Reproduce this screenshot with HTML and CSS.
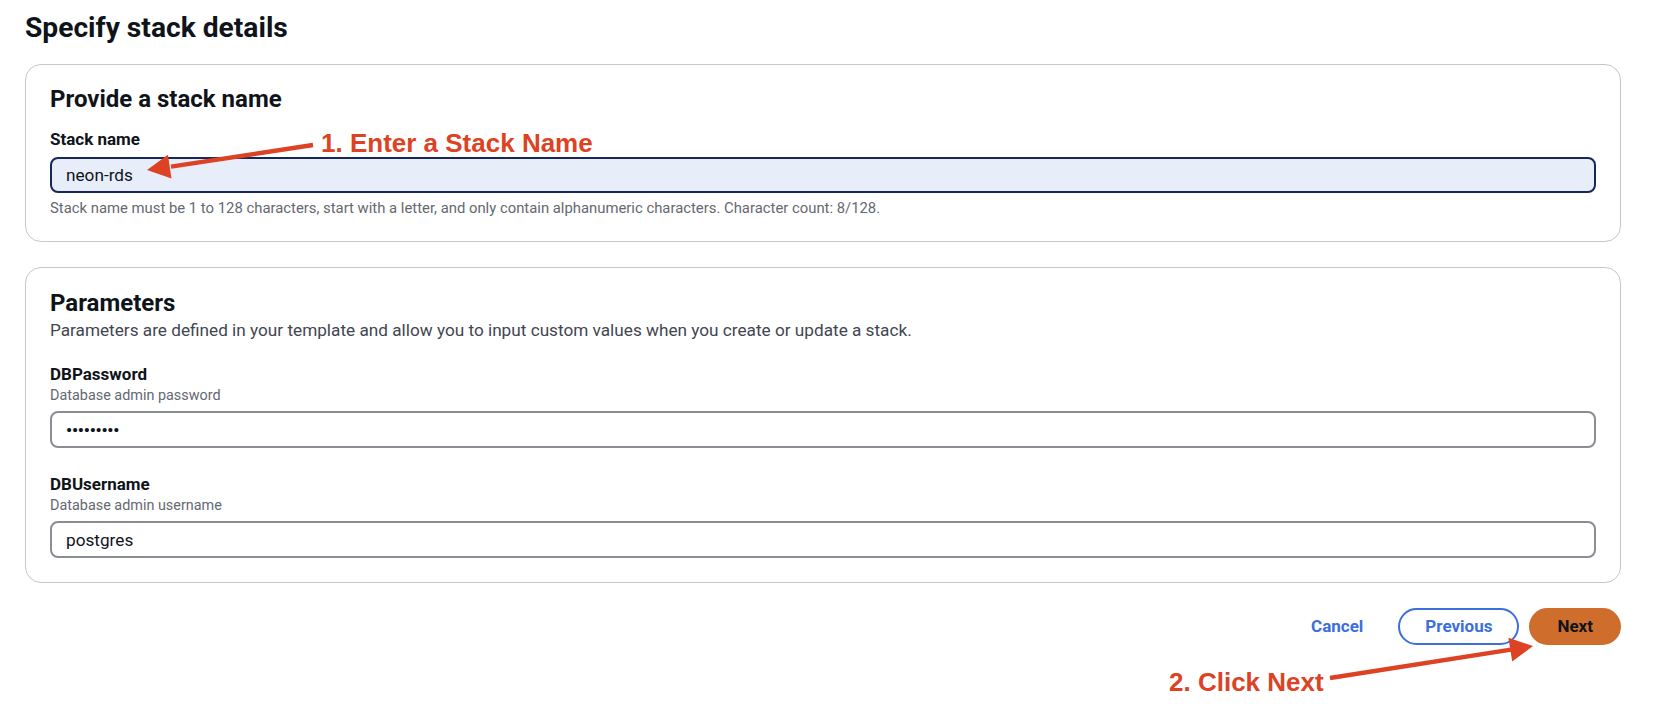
FILE: index.html
```html
<!DOCTYPE html>
<html lang="en">
<head>
<meta charset="utf-8">
<title>Specify stack details</title>
<link rel="stylesheet" href="styles.css">
</head>
<body>
<div class="page">
  <h1 class="title">Specify stack details</h1>

  <section class="card">
    <h2 class="card-title">Provide a stack name</h2>
    <label class="label label--first" for="stackName">Stack name</label>
    <input id="stackName" class="input input--focus" type="text" value="neon-rds">
    <p class="hint">Stack name must be 1 to 128 characters, start with a letter, and only contain alphanumeric characters. Character count: 8/128.</p>
  </section>

  <section class="card card--params">
    <h2 class="card-title">Parameters</h2>
    <p class="desc">Parameters are defined in your template and allow you to input custom values when you create or update a stack.</p>

    <div class="field field--first">
      <label class="label" for="dbPassword">DBPassword</label>
      <div class="sub">Database admin password</div>
      <input id="dbPassword" class="input" type="password" value="123456789">
    </div>

    <div class="field">
      <label class="label" for="dbUsername">DBUsername</label>
      <div class="sub">Database admin username</div>
      <input id="dbUsername" class="input" type="text" value="postgres">
    </div>
  </section>

  <div class="actions">
    <button class="btn btn--link" type="button">Cancel</button>
    <button class="btn btn--normal" type="button">Previous</button>
    <button class="btn btn--primary" type="button">Next</button>
  </div>
</div>

<svg class="annotations" width="1678" height="721" viewBox="0 0 1678 721">
  <g class="arrow">
    <line x1="313" y1="145" x2="171" y2="166.6"/>
    <polygon points="147,170 171.5,178.5 167.9,154.7"/>
  </g>
  <text class="anno" x="321" y="152">1. Enter a Stack Name</text>

  <g class="arrow">
    <line x1="1330" y1="678" x2="1511" y2="649.6"/>
    <polygon points="1533,646 1508.4,637.7 1512.2,661.5"/>
  </g>
  <text class="anno" x="1169" y="691">2. Click Next</text>
</svg>
</body>
</html>
```

FILE: styles.css
```css
* {
  box-sizing: border-box;
}

html, body {
  margin: 0;
  padding: 0;
  background: #ffffff;
}

body {
  font-family: Roboto, "Noto Sans", "Liberation Sans", sans-serif;
  color: #0f141a;
  width: 1678px;
  height: 721px;
  overflow: hidden;
  position: relative;
}

.page {
  padding: 10px 57px 0 25px;
}

.title {
  margin: 0 0 18px;
  font-size: 28.2px;
  line-height: 36px;
  font-weight: 700;
  color: #0f141a;
}

.card {
  border: 1px solid #c6c6cd;
  border-radius: 16px;
  padding: 19px 24px 23px;
  background: #ffffff;
}

.card--params {
  margin-top: 25px;
  padding-top: 20px;
  padding-bottom: 24px;
}

.card-title {
  margin: 0;
  font-size: 24px;
  line-height: 30px;
  font-weight: 700;
  color: #0f141a;
}

.label {
  display: block;
  margin: 0;
  font-size: 17px;
  line-height: 22px;
  font-weight: 700;
  color: #0f141a;
}

.label--first {
  margin-top: 14px;
}

.input {
  display: block;
  width: 100%;
  height: 37px;
  margin: 5px 0 0;
  padding: 0 14px;
  border: 2px solid #8c8c94;
  border-radius: 8px;
  background: #ffffff;
  font-family: Roboto, "Noto Sans", "Liberation Sans", sans-serif;
  font-size: 17.2px;
  color: #0f141a;
  outline: none;
}

.input[type="password"] {
  font-size: 17px;
  letter-spacing: -0.2px;
  font-weight: 700;
}

.input--focus {
  height: 36px;
  margin-top: 7px;
  border-color: #16275a;
  background: #e7eefa;
}

.hint {
  margin: 5px 0 0;
  font-size: 14.85px;
  line-height: 20px;
  color: #656871;
}

.desc {
  margin: 1px 0 0;
  font-size: 17.2px;
  line-height: 22px;
  color: #424650;
}

.field {
  margin-top: 25px;
}

.field--first {
  margin-top: 22px;
}

.sub {
  margin-top: 1px;
  font-size: 14.4px;
  line-height: 20px;
  color: #656871;
}

.actions {
  display: flex;
  justify-content: flex-end;
  gap: 10px;
  margin-top: 25px;
}

.btn {
  height: 37px;
  padding: 0 25px;
  border: 2px solid transparent;
  border-radius: 20px;
  background: transparent;
  font-family: Roboto, "Noto Sans", "Liberation Sans", sans-serif;
  font-size: 17px;
  font-weight: 700;
  line-height: 33px;
  cursor: pointer;
}

.btn--link {
  color: #3b6fdc;
  padding: 0 23px 0 25px;
}

.btn--normal {
  border-color: #3b6fdc;
  color: #3b6fdc;
  background: #ffffff;
}

.btn--primary {
  border-color: #cf6d2c;
  background: #cf6d2c;
  color: #0f141a;
  padding: 0 26px;
}

.annotations {
  position: absolute;
  top: 0;
  left: 0;
  pointer-events: none;
}

.arrow line {
  stroke: #dc4223;
  stroke-width: 4.5;
  stroke-linecap: butt;
}

.arrow polygon {
  fill: #dc4223;
}

.anno {
  font-family: "Liberation Sans", Arial, sans-serif;
  font-weight: 700;
  font-size: 26px;
  fill: #dc4223;
}
```
